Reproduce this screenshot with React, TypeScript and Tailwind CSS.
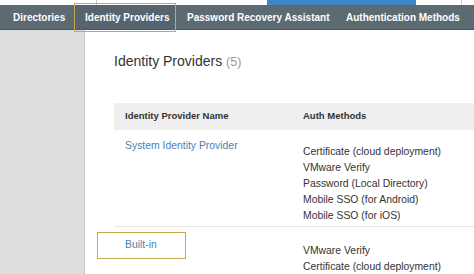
import React from "react";

const methods1 = [
  "Certificate (cloud deployment)",
  "VMware Verify",
  "Password (Local Directory)",
  "Mobile SSO (for Android)",
  "Mobile SSO (for iOS)",
];
const methods2 = ["VMware Verify", "Certificate (cloud deployment)"];

export default function App() {
  return (
    <div
      className="w-[474px] h-[274px] overflow-hidden bg-white flex flex-col"
      style={{ fontFamily: '"Liberation Sans", Arial, sans-serif' }}
    >
      {/* top strip */}
      <div className="h-[5px] flex bg-white shrink-0">
        <div className="w-[97px] border-r border-[#c9c9c9]" />
        <div className="w-[170px]" />
        <div className="w-[149px] bg-[#3f86c8]" />
        <div className="w-[46px] border-r border-[#c9c9c9]" />
        <div className="flex-1" />
      </div>
      {/* nav */}
      <div className="h-[25px] shrink-0 bg-[#5c6a72] border-b border-[#4b565c] flex items-center text-white font-bold text-[10px] whitespace-nowrap relative">
        <div className="pl-[13px] pr-[10px] w-[74px] shrink-0">Directories</div>
        <div className="relative h-full flex items-center w-[102px] pl-[11px] shrink-0 bg-[#566470]">
          Identity Providers
          <span className="absolute left-0 right-0 top-[-2px] bottom-[-3px] border border-[#c9a94f]" />
        </div>
        <div className="pl-[11px] w-[170px] shrink-0">Password Recovery Assistant</div>
        <div className="shrink-0">Authentication Methods</div>
      </div>
      {/* body */}
      <div className="flex flex-1 min-h-0">
        <div className="w-[85px] shrink-0 bg-[#dcdedf] border-r border-[#c6c8ca]" />
        <div className="flex-1 pl-[29px] relative whitespace-nowrap">
          <div className="pt-[21px] h-[73px] text-[14px] text-[#333]">
            Identity Providers <span className="text-[#9a9a9a] text-[12.5px]">(5)</span>
          </div>
          <div className="h-[27px] bg-[#efefef] flex items-center text-[9.5px] font-bold text-[#333]">
            <div className="w-[189px] pl-[11px]">Identity Provider Name</div>
            <div>Auth Methods</div>
          </div>
          <div className="flex border-b border-[#e6e6e6] pt-[8px] pb-[2px] text-[10.4px]">
            <div className="w-[189px] pl-[11px] text-[#4a7fb2]">System Identity Provider</div>
            <div className="pt-[6px] text-[#333] leading-[16px]">
              {methods1.map((m) => (
                <div key={m}>{m}</div>
              ))}
            </div>
          </div>
          <div className="flex pt-[10px] text-[10.4px]">
            <div className="w-[189px] pl-[11px] text-[#4a7fb2] relative">
              Built-in
              <span className="absolute left-[-17px] w-[89px] top-[-5px] h-[27px] border border-[#c9a94f]" />
            </div>
            <div className="pt-[6px] text-[#333] leading-[16px]">
              {methods2.map((m) => (
                <div key={m}>{m}</div>
              ))}
            </div>
          </div>
        </div>
      </div>
    </div>
  );
}
